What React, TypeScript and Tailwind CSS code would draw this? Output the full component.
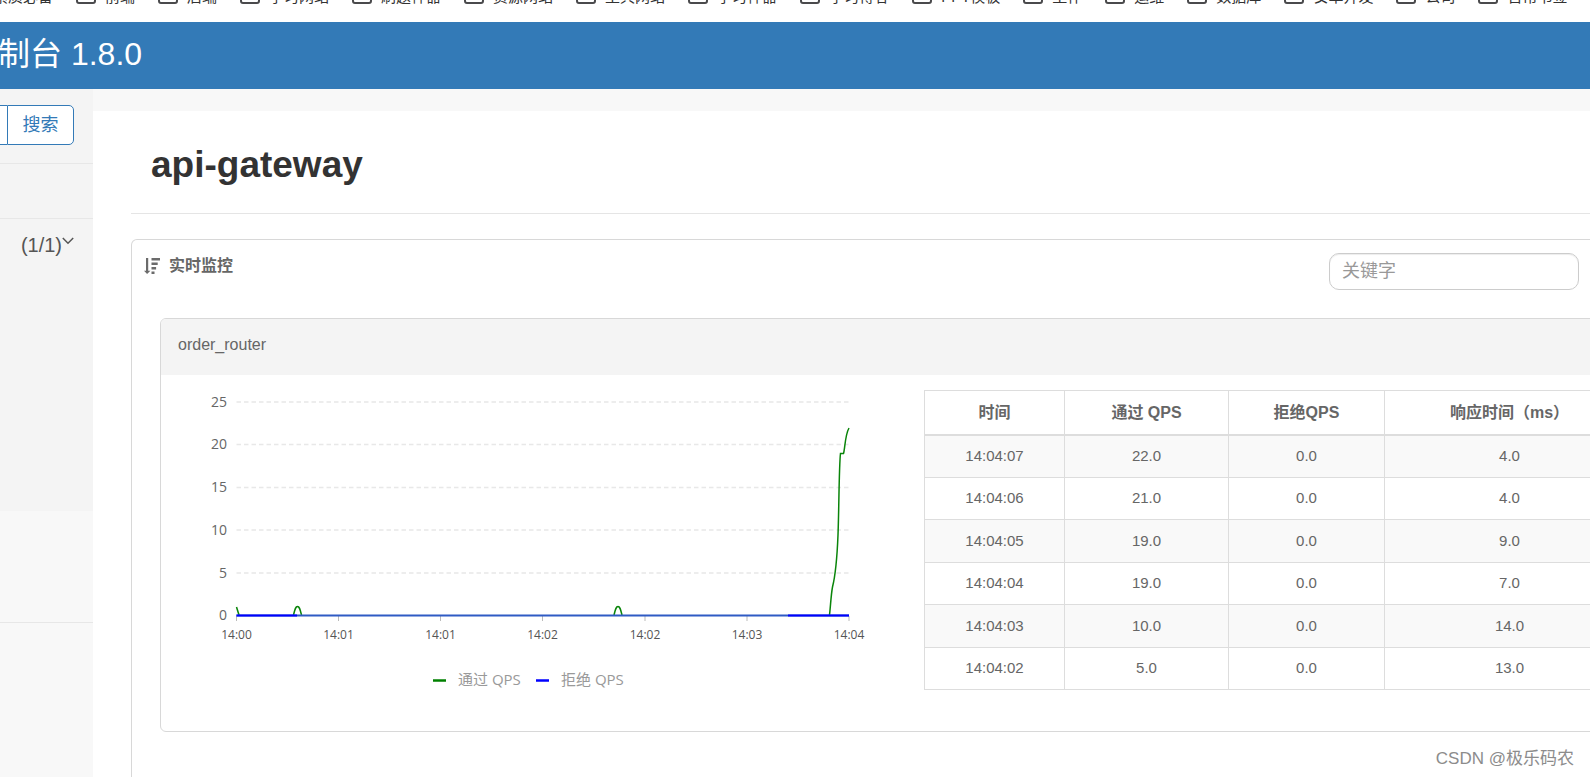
import { useState } from "react";

const bookmarks = [
    "前端",
    "后端",
    "学习网站",
    "刷题神器",
    "资源网站",
    "工具网站",
    "学习神器",
    "学习博客",
    "PPT模板",
    "工作",
    "运维",
    "数据库",
    "安卓开发",
    "公司",
    "日常书签",
];

type Metric = {
    time: string;
    pass: string;
    block: string;
    rt: string;
};

const metrics: Metric[] = [
    { time: "14:04:07", pass: "22.0", block: "0.0", rt: "4.0" },
    { time: "14:04:06", pass: "21.0", block: "0.0", rt: "4.0" },
    { time: "14:04:05", pass: "19.0", block: "0.0", rt: "9.0" },
    { time: "14:04:04", pass: "19.0", block: "0.0", rt: "7.0" },
    { time: "14:04:03", pass: "10.0", block: "0.0", rt: "14.0" },
    { time: "14:04:02", pass: "5.0", block: "0.0", rt: "13.0" },
];

const yTicks = [
    { label: "25", y: 27 },
    { label: "20", y: 69.5 },
    { label: "15", y: 112.5 },
    { label: "10", y: 155 },
    { label: "5", y: 198 },
    { label: "0", y: 240.5 },
];

const xTicks = [
    { label: "14:00", x: 75.5 },
    { label: "14:01", x: 177.5 },
    { label: "14:01", x: 279.5 },
    { label: "14:02", x: 381.5 },
    { label: "14:02", x: 484 },
    { label: "14:03", x: 586 },
    { label: "14:04", x: 688 },
];

const FolderIcon = () => (
    <svg className="h-3.5 w-5 shrink-0" viewBox="0 0 20 14" fill="none" stroke="#4a4a4c" strokeWidth="2">
        <path d="M1 3a2 2 0 0 1 2-2h4l2 2h8a2 2 0 0 1 2 2v6a2 2 0 0 1-2 2H3a2 2 0 0 1-2-2z" />
    </svg>
);

const SortIcon = () => (
    <svg className="h-4 w-4" viewBox="0 0 16 16" fill="#6b6b6b" aria-hidden="true">
        <path d="M2 0h2.200v12.700h2.200L3.100 16 0 12.700h2z" />
        <path d="M7.500 0H16v2.600H7.500zM7.500 4.500h6.200v2.600H7.500zM7.500 9h4.600v2.600H7.500zM7.500 13.400h3V16h-3z" />
    </svg>
);

const BookmarkBar = () => (
    <nav className="h-[22px] overflow-hidden bg-white">
        <ul className="-mt-[13px] flex h-5 items-center gap-[23px] text-[15px] leading-5 whitespace-nowrap text-[#333]">
            <li className="-ml-[7px]">
                <a href="#">素质必备</a>
            </li>
            {bookmarks.map((name) => (
                <li key={name}>
                    <a href="#" className="flex items-center gap-[9px]">
                        <FolderIcon />
                        {name}
                    </a>
                </li>
            ))}
        </ul>
    </nav>
);

const Sidebar = () => (
    <aside className="w-[93px] shrink-0 overflow-hidden bg-[#f8f8f8]">
        <div className="flex h-[75px] justify-end border-b border-[#e7e7e7] bg-[#f4f4f4] pt-4 pr-[19px]">
            <input
                aria-label="应用名"
                className="h-10 w-20 shrink-0 border border-r-0 border-[#337ab7] bg-white px-2 text-lg"
            />
            <button
                type="button"
                className="h-10 w-[67px] shrink-0 rounded-r-[5px] border border-[#337ab7] bg-white text-lg text-[#337ab7]"
            >
                搜索
            </button>
        </div>
        <div className="h-[55px] border-b border-[#e7e7e7] bg-[#f4f4f4]" />
        <div className="h-[404px] border-b border-[#e7e7e7]">
            <div className="h-[292px] bg-[#f4f4f4]">
                <a href="#" className="flex justify-end pt-3 pr-[19px] text-xl leading-7 text-[#555]">
                    (1/1)
                    <svg className="mt-1.5 h-2 w-3" viewBox="0 0 12 8" fill="none" stroke="#555" strokeWidth="1.500">
                        <path d="M0.800 1 6 6.200 11.200 1" />
                    </svg>
                </a>
            </div>
        </div>
    </aside>
);

const QpsChart = () => (
    <svg className="w-full" viewBox="0 0 745 346" role="img" aria-label="QPS">
        {yTicks.map((tick) => (
            <g key={tick.label}>
                {tick.label !== "0" && (
                    <path d={`M75.500 ${tick.y}H688`} stroke="#e8e8e8" strokeWidth="1.300" strokeDasharray="4.500 3" />
                )}
                <text x="66" y={tick.y + 4.5} textAnchor="end" fontSize="14" fill="#666">
                    {tick.label}
                </text>
            </g>
        ))}
        {xTicks.map((tick) => (
            <g key={tick.x}>
                <path d={`M${tick.x} 241v5`} stroke="#bbb" />
                <text x={tick.x} y="264" textAnchor="middle" fontSize="12" fill="#555">
                    {tick.label}
                </text>
            </g>
        ))}
        <g fill="none" stroke="#0a850a" strokeWidth="1.500">
            <path d="M75.500 232L78 240" />
            <path d="M132.500 240C134 234 134.500 231.500 136.500 231.500S139 234 140.500 240" />
            <path d="M453 240C454.500 234 455 231.500 457 231.500S459.500 234 461 240" />
            <path d="M668.500 240C669.500 232 670 220 671.500 212C675 198 676 185 677 160C678 135 678 90 679.500 78.500H682.500C684 74 684 60 688 53" />
        </g>
        <path d="M75.500 240.500H688" stroke="#2f5bc4" strokeWidth="2" />
        <path d="M75.500 240.500H136M627 240.500H688" stroke="#00f" strokeWidth="2" />
        <path d="M272 305.500h13" stroke="#008000" strokeWidth="2.500" />
        <text x="297" y="310" fontSize="15" fill="#999">
            通过 QPS
        </text>
        <path d="M375 305.500h13" stroke="#00f" strokeWidth="2.500" />
        <text x="400" y="310" fontSize="15" fill="#999">
            拒绝 QPS
        </text>
    </svg>
);

const MetricTable = () => (
    <table className="w-full table-fixed border-collapse text-center text-[15px] text-[#666]">
        <thead>
            <tr className="h-11 text-base">
                <th className="w-[140px] border border-b-2 border-[#ddd] pt-0.5">时间</th>
                <th className="w-[164px] border border-b-2 border-[#ddd] pt-0.5">通过 QPS</th>
                <th className="w-[156px] border border-b-2 border-[#ddd] pt-0.5">拒绝QPS</th>
                <th className="border border-b-2 border-[#ddd] pt-0.5">响应时间（ms）</th>
            </tr>
        </thead>
        <tbody>
            {metrics.map((item) => (
                <tr key={item.time} className="odd:h-[43px] odd:bg-[#f9f9f9] even:h-[42px]">
                    <td className="border border-[#ddd]">{item.time}</td>
                    <td className="border border-[#ddd]">{item.pass}</td>
                    <td className="border border-[#ddd]">{item.block}</td>
                    <td className="border border-[#ddd]">{item.rt}</td>
                </tr>
            ))}
        </tbody>
    </table>
);

const App = () => {
    const [keyword, setKeyword] = useState("");

    return (
        <div className="relative flex min-h-screen flex-col overflow-hidden bg-white font-['Liberation_Sans','Noto_Sans_CJK_SC',sans-serif]">
            <BookmarkBar />
            <header className="flex h-[67px] items-center bg-[#337ab7] pb-1">
                <span className="-ml-[34px] text-[32px] leading-none whitespace-nowrap text-white">控制台 1.8.0</span>
            </header>
            <div className="flex flex-1">
                <Sidebar />
                <main className="flex min-w-0 flex-1 flex-col">
                    <div className="h-[22px] bg-[#f8f8f8]" />
                    <div className="-mr-[91px] flex flex-1 flex-col pl-[38px]">
                        <h1 className="h-[103px] border-b border-[#e5e5e5] pt-8 pl-5 text-[37px] leading-11 font-bold text-[#333]">
                            api-gateway
                        </h1>
                        <section className="mt-[25px] flex-1 rounded-t-md border border-b-0 border-[#d8d8d8] px-7">
                            <div className="-mx-4 flex h-[78px] justify-between pt-[13px] pr-[89px]">
                                <h2 className="flex h-[25px] items-center gap-[9px] text-base font-bold text-[#666]">
                                    <SortIcon />
                                    实时监控
                                </h2>
                                <input
                                    aria-label="关键字"
                                    placeholder="关键字"
                                    value={keyword}
                                    onChange={(e) => setKeyword(e.target.value)}
                                    className="h-[37px] w-[250px] rounded-[10px] border border-[#ccc] px-3 text-lg shadow-[inset_0_1px_1px_rgba(0,0,0,0.075)] placeholder:text-[#999]"
                                />
                            </div>
                            <div className="overflow-hidden rounded-md border border-[#d8d8d8]">
                                <div className="h-14 bg-[#f4f4f4] pt-3.5 pl-[17px] text-base text-[#666]">
                                    order_router
                                </div>
                                <div className="grid grid-cols-2 pb-[10px] font-['Open_Sans','Noto_Sans_CJK_SC',sans-serif]">
                                    <QpsChart />
                                    <div className="pt-[15px] pr-4 pl-[18px] font-['Liberation_Sans','Noto_Sans_CJK_SC',sans-serif]">
                                        <MetricTable />
                                    </div>
                                </div>
                            </div>
                        </section>
                    </div>
                </main>
            </div>
            <span className="absolute right-4 bottom-1 text-[17px] leading-7 text-[#8c8c8c]">CSDN @极乐码农</span>
        </div>
    );
};

export default App;
